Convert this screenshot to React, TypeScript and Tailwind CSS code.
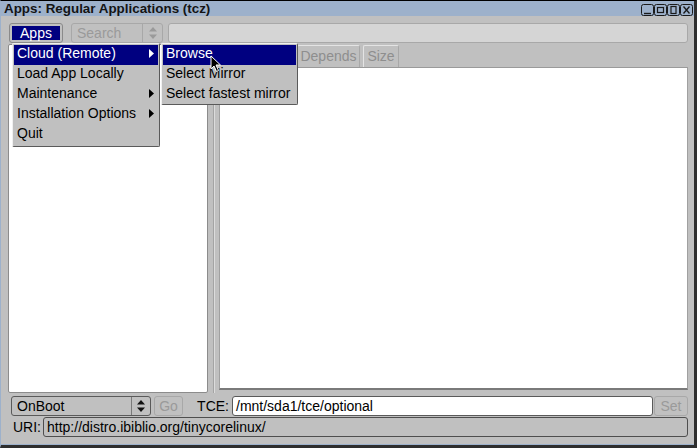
const font = "font-['Liberation_Sans',Arial,sans-serif]";

function UpDown({ color }: { color: string }) {
  return (
    <svg width="8" height="12" viewBox="0 0 8 12">
      <path d="M4 0 L8 4.5 L0 4.5 Z" fill={color} />
      <path d="M4 12 L8 7.5 L0 7.5 Z" fill={color} />
    </svg>
  );
}

function Arrow({ color }: { color: string }) {
  return (
    <svg width="5" height="9" viewBox="0 0 5 9">
      <path d="M0 0 L5 4.5 L0 9 Z" fill={color} />
    </svg>
  );
}

function TitleButtons() {
  return (
    <svg width="52" height="12" viewBox="0 0 52 12" className="mt-[3px]">
      <g fill="none" stroke="#1a1a1a" strokeWidth="1">
        <rect x="0.5" y="0.5" width="12" height="11" rx="2" />
        <rect x="13.5" y="0.5" width="12" height="11" rx="2" />
        <rect x="26.5" y="0.5" width="12" height="11" rx="2" />
        <rect x="39.5" y="0.5" width="12" height="11" rx="2" />
        <path d="M3 9.5 H10" strokeWidth="1.4" />
        <rect x="16.5" y="3.5" width="6" height="5" strokeWidth="1.2" />
        <rect x="30" y="2.5" width="5" height="7" strokeWidth="1.2" />
        <path d="M42.5 2.5 L48.5 9.5 M48.5 2.5 L42.5 9.5" strokeWidth="1.3" />
      </g>
    </svg>
  );
}

function Tab({ label, w }: { label: string; w: number }) {
  return (
    <div
      className="h-[22px] flex items-center justify-center bg-[#c0c0c0] border border-b-0 border-[#a8a8a8] border-t-[#e4e4e4] border-l-[#e4e4e4] rounded-t-[2px] text-[#8e8e8e] text-[14px]"
      style={{ width: w }}
    >
      {label}
    </div>
  );
}

const mainItems = [
  { label: 'Cloud (Remote)', sub: true, active: true },
  { label: 'Load App Locally', sub: false },
  { label: 'Maintenance', sub: true },
  { label: 'Installation Options', sub: true },
  { label: 'Quit', sub: false },
];

const subItems = ['Browse', 'Select Mirror', 'Select fastest mirror'];

export default function App() {
  return (
    <div
      className={`${font} relative w-[697px] h-[448px] overflow-hidden bg-[#c0c0c0] border-t border-t-black border-l border-l-[#9db1cb] border-r-[3px] border-r-[#2e2e2e] border-b-[3px] border-b-[#2e2e2e] flex flex-col text-black`}
    >
      {/* title bar */}
      <div className="h-[15px] bg-[#9db1cb] flex justify-between pl-[3px] pr-[1px]">
        <span className="text-[13.4px] font-bold leading-[15px] text-[#141414]">Apps: Regular Applications (tcz)</span>
        <TitleButtons />
      </div>

      <div className="flex-1 flex flex-col border-b border-b-[#9db1cb]">
        {/* top row */}
        <div className="flex items-center h-[20px] mt-[7px] pl-[8px] pr-[6px]">
          <div className="w-[54px] h-[20px] border border-[#8a8a8a] rounded-[3px] p-[2px] bg-[#c0c0c0]">
            <div className="h-full bg-[#000080] text-white text-[14px] leading-[15px] flex justify-center">Apps</div>
          </div>
          <div className="ml-[8px] w-[92px] h-[20px] border border-[#a8a8a8] rounded-[3px] flex">
            <div className="flex-1 text-[14px] leading-[18px] pl-[5px] text-[#9a9a9a]">Search</div>
            <div className="w-[20px] border-l border-[#a8a8a8] flex items-center justify-center">
              <UpDown color="#9a9a9a" />
            </div>
          </div>
          <div className="ml-[5px] flex-1 h-[20px] bg-[#d5d5d5] border border-[#a8a8a8] rounded-[3px]" />
        </div>

        {/* panels */}
        <div className="flex h-[349px] mt-[1px] pl-[7px] pr-[6px]">
          <div className="w-[200px] h-full bg-white border border-[#8c8c8c] rounded-[2px]" />
          <div className="w-[5px]" />
          <div className="w-px bg-[#a4a4a4]" />
          <div className="w-px bg-[#dcdcdc]" />
          <div className="w-[4px]" />
          <div className="flex-1 flex flex-col h-[346px]">
            <div className="flex gap-[3px] h-[22px] mt-[1px]">
              <Tab label="Info" w={36} />
              <Tab label="Files" w={36} />
              <Tab label="Depends" w={63} />
              <Tab label="Size" w={36} />
            </div>
            <div className="flex-1 bg-white border border-[#a0a0a0] border-t-[#9a9a9a] border-b-[2px] border-b-[#7a7a7a]" />
          </div>
        </div>

        {/* bottom row 1 */}
        <div className="flex items-center h-[20px] mt-[3px] pl-[10px] pr-[6px] text-[14px]">
          <div className="w-[140px] h-[20px] border border-[#5a5a5a] rounded-[3px] flex">
            <div className="flex-1 leading-[18px] pl-[5px]">OnBoot</div>
            <div className="w-[19px] border-l border-[#7a7a7a] flex items-center justify-center">
              <UpDown color="#111" />
            </div>
          </div>
          <div className="ml-[3px] w-[29px] h-[20px] border border-[#a8a8a8] rounded-[3px] text-[#9a9a9a] leading-[18px] text-center">Go</div>
          <div className="w-[49px] text-right pr-[3px]">TCE:</div>
          <div className="flex-1 h-[20px] bg-white border border-[#5a5a5a] rounded-[3px] leading-[18px] pl-[3px]">/mnt/sda1/tce/optional</div>
          <div className="ml-px w-[34px] h-[20px] border border-[#a8a8a8] rounded-[3px] text-[#9a9a9a] leading-[18px] text-center">Set</div>
        </div>

        {/* bottom row 2 */}
        <div className="flex items-center h-[20px] mt-[1px] pl-[12px] pr-[6px] text-[14px]">
          <div className="w-[30px]">URI:</div>
          <div className="flex-1 h-[20px] border border-[#4e4e4e] rounded-[3px] leading-[18px] pl-[3px]">http://distro.ibiblio.org/tinycorelinux/</div>
        </div>
      </div>

      {/* main menu */}
      <div className="absolute left-[11px] top-[42px] w-[148px] h-[104px] bg-[#c0c0c0] border border-[#f0f0f0] border-r-[#5a5a5a] border-b-[#5a5a5a] rounded-[2px] p-[1px] text-[14px]">
        {mainItems.map((it) => (
          <div
            key={it.label}
            className={`h-[20px] flex items-start justify-between pl-[3px] pr-[4px] leading-[17px] ${it.active ? 'bg-[#000080] text-white' : ''}`}
          >
            <span>{it.label}</span>
            {it.sub && (
              <span className="pt-[4px]">
                <Arrow color={it.active ? '#fff' : '#000'} />
              </span>
            )}
          </div>
        ))}
      </div>

      {/* sub menu */}
      <div className="absolute left-[160px] top-[42px] w-[137px] h-[62px] bg-[#c0c0c0] border border-[#f0f0f0] border-r-[#5a5a5a] border-b-[#5a5a5a] rounded-[2px] p-[1px] text-[14px]">
        {subItems.map((s, i) => (
          <div key={s} className={`h-[20px] leading-[17px] pl-[3px] ${i === 0 ? 'bg-[#000080] text-white' : ''}`}>
            {s}
          </div>
        ))}
      </div>

      {/* mouse pointer */}
      <svg className="absolute left-[209px] top-[54px]" width="12" height="18" viewBox="0 0 12 18">
        <path d="M1 1 L1 14 L4 11 L6.5 16.5 L8.5 15.5 L6 10 L10.5 10 Z" fill="#000" stroke="#fff" strokeWidth="1" />
      </svg>
    </div>
  );
}
